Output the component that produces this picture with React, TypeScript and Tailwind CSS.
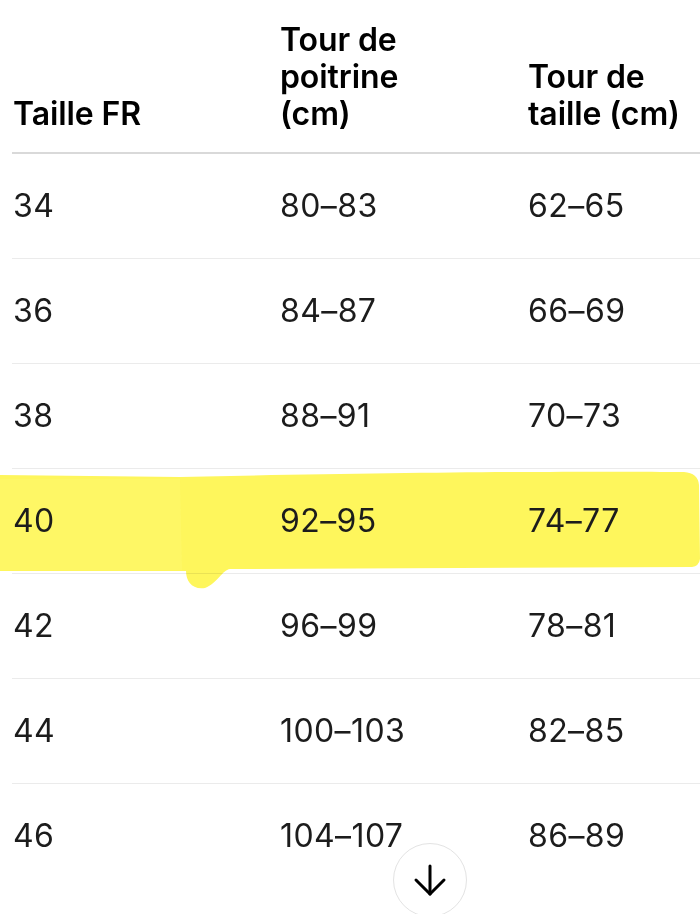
import { ArrowDown } from 'lucide-react'

const rows = [
  ['34', '80–83', '62–65'],
  ['36', '84–87', '66–69'],
  ['38', '88–91', '70–73'],
  ['40', '92–95', '74–77'],
  ['42', '96–99', '78–81'],
  ['44', '100–103', '82–85'],
  ['46', '104–107', '86–89'],
]

const Highlight = () => (
  <svg
    className="pointer-events-none absolute left-0 top-[2px] mix-blend-multiply"
    width="700"
    height="122"
    viewBox="0 0 700 122"
  >
    <path
      d="M0 4 L180 6 C400 1 600 0 684 1 Q698 2 699 14 L700 88 Q699 95 692 96 L230 98 C222 99 218 112 205 117 C192 119 186 110 186 100 L0 100 Z"
      fill="#fef65c"
    />
    <path d="M0 8 L180 8 L182 99 L0 99 Z" fill="#fdf86a" opacity="0.6" />
  </svg>
)

export default function App() {
  return (
    <div className="relative h-[914px] w-[700px] overflow-hidden bg-white font-['Inter',sans-serif] text-[#1c1c1c]">
      <div className="grid grid-cols-[267px_248px_1fr] pl-[13px] pb-[20px] pt-[21px] text-[32px] font-semibold leading-[37px] tracking-[-0.1px] text-black">
        <div className="self-end">Taille FR</div>
        <div className="self-end">
          Tour de
          <br />
          poitrine
          <br />
          (cm)
        </div>
        <div className="self-end">
          Tour de
          <br />
          taille (cm)
        </div>
      </div>
      <div className="ml-[12px] h-[2px] bg-[#d9d9d9]" />
      {rows.map((r, i) => (
        <div key={r[0]} className="relative">
          {r[0] === '40' && <Highlight />}
          <div className="relative grid h-[104px] grid-cols-[267px_248px_1fr] items-center pl-[13px] text-[32px] leading-none tracking-[0.4px]">
            <div>{r[0]}</div>
            <div>{r[1]}</div>
            <div>{r[2]}</div>
          </div>
          {i < rows.length - 1 && <div className="ml-[12px] h-px bg-[#ebebeb]" />}
        </div>
      ))}
      <div className="absolute left-[393px] top-[843px] flex h-[74px] w-[74px] items-center justify-center rounded-full border-[1.5px] border-[#e3e3e3] bg-white">
        <ArrowDown size={48} strokeWidth={1.5} className="text-black" />
      </div>
    </div>
  )
}
